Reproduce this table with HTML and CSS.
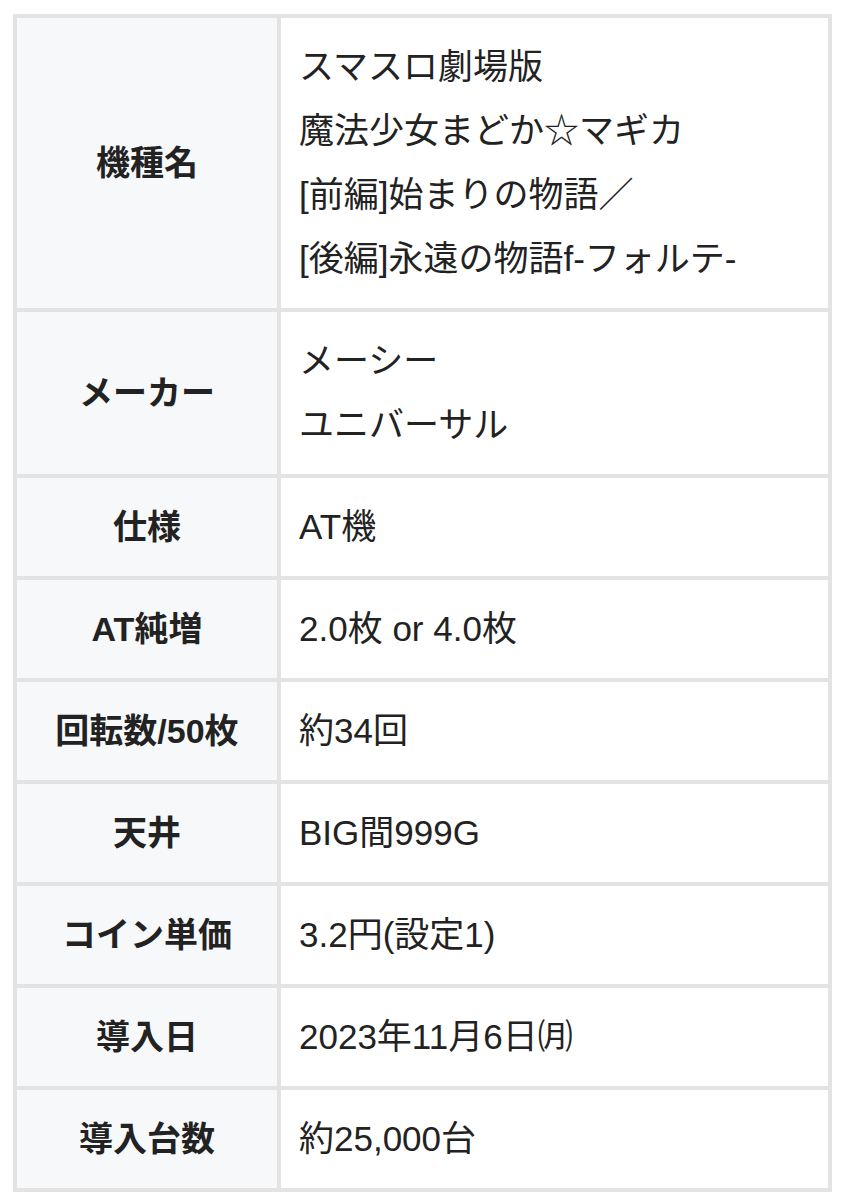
FILE: index.html
```html
<!DOCTYPE html>
<html lang="ja">
<head>
<meta charset="utf-8">
<title>スペック</title>
<link rel="stylesheet" href="styles.css">
</head>
<body>
<div class="page">
  <table class="spec">
    <tbody>
      <tr>
        <th>機種名</th>
        <td>スマスロ劇場版<br>魔法少女まどか☆マギカ<br>[前編]始まりの物語／<br>[後編]永遠の物語f-フォルテ-</td>
      </tr>
      <tr>
        <th>メーカー</th>
        <td>メーシー<br>ユニバーサル</td>
      </tr>
      <tr>
        <th>仕様</th>
        <td>AT機</td>
      </tr>
      <tr>
        <th>AT純増</th>
        <td>2.0枚 or 4.0枚</td>
      </tr>
      <tr>
        <th>回転数/50枚</th>
        <td>約34回</td>
      </tr>
      <tr>
        <th>天井</th>
        <td>BIG間999G</td>
      </tr>
      <tr>
        <th>コイン単価</th>
        <td>3.2円(設定1)</td>
      </tr>
      <tr>
        <th>導入日</th>
        <td>2023年11月6日㈪</td>
      </tr>
      <tr>
        <th>導入台数</th>
        <td>約25,000台</td>
      </tr>
    </tbody>
  </table>
</div>
</body>
</html>
```
FILE: styles.css
```css
html, body {
  margin: 0;
  padding: 0;
  background: #ffffff;
}

.page {
  padding: 14px 0 0 13px;
  font-family: "Liberation Sans", "Noto Sans CJK JP", sans-serif;
  color: #222222;
}

.spec {
  width: 819px;
  border-collapse: separate;
  border-spacing: 4px;
  background: #e3e3e4;
  table-layout: fixed;
}

.spec th,
.spec td {
  padding: 17px 18px;
  line-height: 64px;
  vertical-align: middle;
}

.spec th {
  width: 224px;
  background: #f7f8fa;
  font-size: 34px;
  font-weight: 700;
  text-align: center;
  color: #222222;
}

.spec td {
  background: #ffffff;
  font-size: 35px;
  font-weight: 400;
  text-align: left;
  color: #222222;
}
```
